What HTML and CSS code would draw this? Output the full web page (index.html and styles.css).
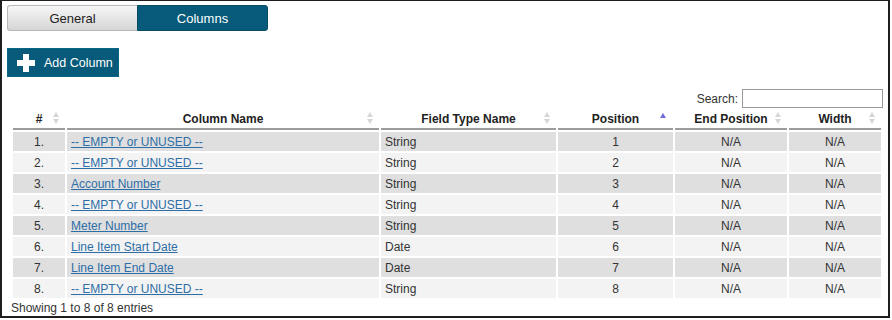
FILE: index.html
```html
<!DOCTYPE html>
<html>
<head>
<meta charset="utf-8">
<link rel="stylesheet" href="styles.css">
</head>
<body>
<div class="frame">
  <div class="tabs">
    <div class="tab tab-general">General</div>
    <div class="tab tab-active">Columns</div>
  </div>
  <div class="btn-row">
    <button class="btn-add">
      <svg class="plus" width="18" height="18" viewBox="0 0 18 18"><path d="M6 0h6v6h6v6h-6v6H6v-6H0V6h6z" fill="#fff"/></svg>
      <span>Add Column</span>
    </button>
  </div>
  <div class="dt">
    <div class="search">
      <label>Search:</label>
      <input type="text" class="search-input">
    </div>
    <table class="grid">
      <colgroup>
        <col class="c-num"><col class="c-name"><col class="c-type"><col class="c-pos"><col class="c-end"><col class="c-width">
      </colgroup>
      <thead>
        <tr>
          <th class="sorting">#<span class="sort"></span></th>
          <th class="sorting">Column Name<span class="sort"></span></th>
          <th class="sorting">Field Type Name<span class="sort"></span></th>
          <th class="sorting">Position<span class="sort-asc"></span></th>
          <th class="sorting">End Position<span class="sort"></span></th>
          <th class="sorting">Width<span class="sort"></span></th>
        </tr>
      </thead>
      <tbody>
        <tr class="odd"><td class="ctr">1.</td><td><a href="#">-- EMPTY or UNUSED --</a></td><td>String</td><td class="ctr">1</td><td class="ctr">N/A</td><td class="ctr">N/A</td></tr>
        <tr class="even"><td class="ctr">2.</td><td><a href="#">-- EMPTY or UNUSED --</a></td><td>String</td><td class="ctr">2</td><td class="ctr">N/A</td><td class="ctr">N/A</td></tr>
        <tr class="odd"><td class="ctr">3.</td><td><a href="#">Account Number</a></td><td>String</td><td class="ctr">3</td><td class="ctr">N/A</td><td class="ctr">N/A</td></tr>
        <tr class="even"><td class="ctr">4.</td><td><a href="#">-- EMPTY or UNUSED --</a></td><td>String</td><td class="ctr">4</td><td class="ctr">N/A</td><td class="ctr">N/A</td></tr>
        <tr class="odd"><td class="ctr">5.</td><td><a href="#">Meter Number</a></td><td>String</td><td class="ctr">5</td><td class="ctr">N/A</td><td class="ctr">N/A</td></tr>
        <tr class="even"><td class="ctr">6.</td><td><a href="#">Line Item Start Date</a></td><td>Date</td><td class="ctr">6</td><td class="ctr">N/A</td><td class="ctr">N/A</td></tr>
        <tr class="odd"><td class="ctr">7.</td><td><a href="#">Line Item End Date</a></td><td>Date</td><td class="ctr">7</td><td class="ctr">N/A</td><td class="ctr">N/A</td></tr>
        <tr class="even"><td class="ctr">8.</td><td><a href="#">-- EMPTY or UNUSED --</a></td><td>String</td><td class="ctr">8</td><td class="ctr">N/A</td><td class="ctr">N/A</td></tr>
      </tbody>
    </table>
  </div>
  <div class="info">Showing 1 to 8 of 8 entries</div>
</div>
</body>
</html>
```
FILE: styles.css
```css
* { box-sizing: border-box; }
html, body { margin: 0; padding: 0; background: #fff; }
body { font-family: "Liberation Sans", Arial, sans-serif; color: #333; }

.frame {
  width: 890px;
  height: 318px;
  border: 2px solid #1e1e1e;
  border-top-width: 1px;
  padding: 4px 0 0 5px;
}

.tabs { display: flex; width: 261px; height: 26px; }
.tab {
  flex: 1;
  display: flex;
  align-items: center;
  justify-content: center;
  font-size: 13px;
}
.tab-general {
  background: linear-gradient(#f6f6f6, #d6d6d6);
  border: 1px solid #b8b8b8;
  border-right: none;
  border-radius: 3px 0 0 3px;
  color: #222;
}
.tab-active {
  background: #075a79;
  border: 1px solid #064c66;
  border-radius: 0 3px 3px 0;
  color: #fff;
}

.btn-row { margin-top: 17px; height: 29px; }
.btn-add {
  display: flex;
  align-items: center;
  gap: 9px;
  height: 29px;
  width: 112px;
  padding: 0 0 0 9px;
  background: #075a79;
  border: 1px solid #0a6686;
  color: #fff;
  font-family: "Liberation Sans", Arial, sans-serif;
  font-size: 12.5px;
  cursor: pointer;
}
.plus { display: block; flex: none; }

.dt { margin-left: 4px; width: 872px; margin-top: 12px; }
.search {
  display: flex;
  justify-content: flex-end;
  align-items: center;
  gap: 4px;
  height: 19px;
  font-size: 12px;
  color: #333;
}
.search-input {
  width: 141px;
  height: 19px;
  border: 1px solid #9a9a9a;
  margin: 0;
  padding: 0 3px;
}

.grid {
  table-layout: fixed;
  width: 872px;
  border-collapse: separate;
  border-spacing: 2px;
  font-size: 12px;
}
.c-num { width: 52px; }
.c-name { width: 312px; }
.c-type { width: 175px; }
.c-pos { width: 115px; }
.c-end { width: 112px; }
.c-width { width: 92px; }

.grid th {
  position: relative;
  height: 20px;
  padding: 0 14px 1px;
  border-bottom: 2px solid #9c9c9c;
  font-weight: bold;
  color: #222;
  text-align: center;
  vertical-align: middle;
}
.sort, .sort-asc {
  position: absolute;
  right: 5px;
  top: 2px;
  width: 7px;
  height: 13px;
}
.sort::before, .sort::after, .sort-asc::before {
  content: "";
  position: absolute;
  left: 0;
  border-left: 3.5px solid transparent;
  border-right: 3.5px solid transparent;
}
.sort::before { top: 0; border-bottom: 5px solid #d6d6d6; }
.sort::after { top: 7px; border-top: 5px solid #d6d6d6; }
.sort-asc { right: 6px; }
.sort-asc::before { top: 1px; border-bottom: 5px solid #6e6fd8; }

.grid td {
  height: 19px;
  padding: 0 4px;
  vertical-align: middle;
  white-space: nowrap;
  color: #333;
}
.grid tr.odd td { background: #dfdfdf; }
.grid tr.even td { background: #f3f3f3; }
.grid td.ctr { text-align: center; }
.grid a { color: #2e6ea6; text-decoration: underline; }

.info { font-size: 12px; color: #333; margin: 1px 0 0 4px; line-height: 14px; }
```
